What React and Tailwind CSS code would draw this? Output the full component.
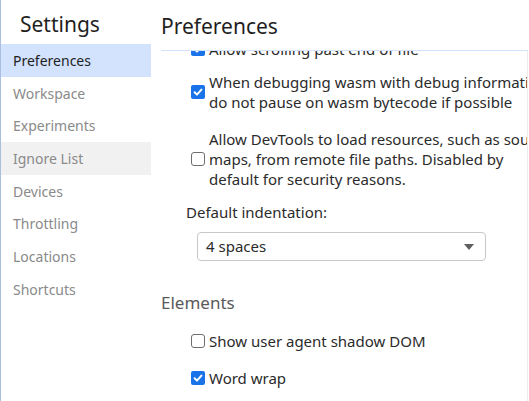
const font = { fontFamily: '"Noto Sans", "Noto Sans CJK KR", sans-serif' };

const navItems = ['Preferences', 'Workspace', 'Experiments', 'Ignore List', 'Devices', 'Throttling', 'Locations', 'Shortcuts'];

function Checkbox({ checked }) {
  if (checked) {
    return (
      <span className="w-[14px] h-[14px] shrink-0 rounded-[2px] bg-[#1a73e8] flex items-center justify-center">
        <svg width="10" height="10" viewBox="0 0 10 10">
          <path d="M1.6 5.2 L4 7.6 L8.4 2.6" stroke="white" strokeWidth="2" fill="none" strokeLinecap="round" strokeLinejoin="round" />
        </svg>
      </span>
    );
  }
  return <span className="w-[14px] h-[14px] shrink-0 rounded-[3px] border border-[#6e6e6e] bg-white" />;
}

function CheckRow({ checked, lines, className = '' }) {
  return (
    <div className={`flex items-center gap-[4px] pl-[30px] ${className}`}>
      <Checkbox checked={checked} />
      <div className="text-[15px] leading-[20px] text-[#2b2b2b] whitespace-nowrap">
        {lines.map((l, i) => (
          <div key={i}>{l}</div>
        ))}
      </div>
    </div>
  );
}

export default function App() {
  return (
    <div className="w-[529px] h-[401px] flex bg-white overflow-hidden" style={font}>
      {/* 사이드바 */}
      <div className="w-[151px] shrink-0 border-l border-[#a9bfdd] flex flex-col">
        <div className="h-[44px] pl-[19px] pt-[9px] text-[21px] leading-[30px] text-[#1f1f1f]">Settings</div>
        {navItems.map((item, i) => (
          <div
            key={item}
            className={`h-[32.7px] flex items-center pl-[12px] text-[14px] ${
              i === 0 ? 'bg-[#d3e3fd] text-[#1f1f1f]' : i === 3 ? 'bg-[#f1f1f1] text-[#8a8a8a]' : 'text-[#8a8a8a]'
            }`}
          >
            {item}
          </div>
        ))}
      </div>

      {/* 본문 */}
      <div className="flex-1 flex flex-col min-w-0 pl-[10px]">
        <div className="h-[50px] pt-[11px] text-[21px] leading-[30px] text-[#1f1f1f]">Preferences</div>
        <div className="flex-1 w-[367px] border-t border-[#d3e3fd] border-r border-r-[#ececec] overflow-hidden">
          <div className="-mt-[12px]">
            <CheckRow checked lines={['Allow scrolling past end of file']} />
            <CheckRow checked className="mt-[13px]" lines={['When debugging wasm with debug information,', 'do not pause on wasm bytecode if possible']} />
            <CheckRow
              className="mt-[17px]"
              lines={['Allow DevTools to load resources, such as source', 'maps, from remote file paths. Disabled by', 'default for security reasons.']}
            />
            <div className="pl-[25px] mt-[13px] text-[15px] leading-[20px] text-[#2b2b2b]">Default indentation:</div>
            <div className="ml-[36px] mt-[10px] w-[289px] h-[29px] rounded-[4px] border border-[#c8c8c8] flex items-center justify-between pl-[8px] pr-[11px] text-[15px] text-[#2b2b2b]">
              <span>4 spaces</span>
              <svg width="10" height="6" viewBox="0 0 10 6">
                <path d="M0 0 H10 L5 6 Z" fill="#5f5f5f" />
              </svg>
            </div>
            <div className="mt-[30px] text-[17px] leading-[24px] text-[#5a5a5a]">Elements</div>
            <CheckRow className="mt-[16px]" lines={['Show user agent shadow DOM']} />
            <CheckRow checked className="mt-[17px]" lines={['Word wrap']} />
          </div>
        </div>
      </div>
    </div>
  );
}
